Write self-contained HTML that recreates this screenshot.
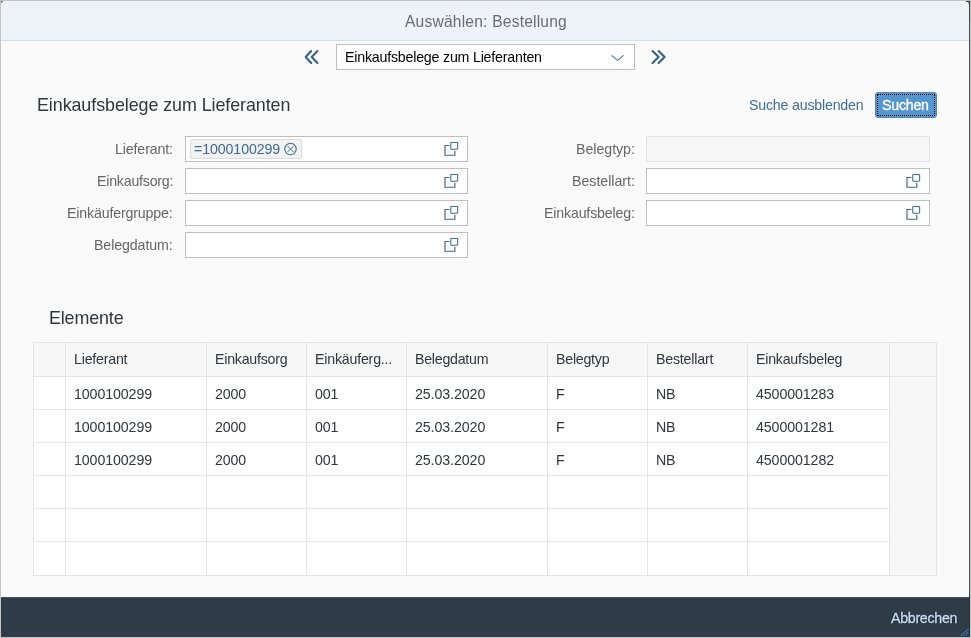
<!DOCTYPE html>
<html><head><meta charset="utf-8">
<style>
*{box-sizing:border-box;margin:0;padding:0}
html,body{width:971px;height:638px;overflow:hidden;background:#c4c4c4;font-family:"Liberation Sans",sans-serif}
.a{position:absolute;white-space:nowrap;line-height:1}
.t{will-change:transform}
#dlg{position:absolute;left:1px;top:1px;width:969px;height:636px;background:#fafafa;overflow:hidden}
#hdr{position:absolute;left:0;top:0;width:968px;height:40px;background:#eef3f8;border-bottom:1px solid #d4e0ec}
#rline{position:absolute;left:968px;top:0;width:1px;height:636px;background:linear-gradient(#34404c 0,#34404c 20px,#505356 20px,#505356 595px,#2b3640 595px)}
.inp{position:absolute;height:26px;background:#fff;border:1px solid #bfbfbf}
.inp.dis{background:#f7f7f7;border-color:#e3e3e3}
#ftr{position:absolute;left:0;top:596px;width:968px;height:40px;background:#2f3b47;border-top:1px solid #3d5266}
</style></head><body>
<div id="dlg">
  <div id="hdr"></div>
  <div id="rline"></div>
  <div id="ftr"></div>
</div>
<div class="a" style="left:1px;top:1px;width:2px;height:2px;background:#777;border-radius:0 0 2px 0"></div>
<div class="a" style="left:966px;top:1px;width:4px;height:1px;background:#2d3946"></div>
<div class="a" style="left:968px;top:2px;width:1px;height:2px;background:#9aa3ab"></div>
<svg class="a" style="left:300px;top:46px" width="24" height="22" viewBox="0 0 24 22">
  <path d="M11.2 5 L5.7 11 L11.2 17 M17.4 5 L11.7 11 L17.4 17" fill="none" stroke="#346187" stroke-width="2.1" stroke-linecap="round" stroke-linejoin="round"/>
</svg>
<div class="inp" style="left:336px;top:44px;width:299px;height:26px"></div>
<svg class="a" style="left:608px;top:50px" width="20" height="14" viewBox="0 0 20 14">
  <path d="M3.5 5.3 L9.6 10.4 L15.6 5.3" fill="none" stroke="#4a7299" stroke-width="1.1"/>
</svg>
<svg class="a" style="left:646px;top:46px" width="24" height="22" viewBox="0 0 24 22">
  <path d="M6.55 5 L12.6 11 L6.55 17 M12.6 5 L18.6 11 L12.6 17" fill="none" stroke="#346187" stroke-width="2.1" stroke-linecap="round" stroke-linejoin="round"/>
</svg>
<div class="a" style="left:875px;top:92px;width:62px;height:26px;background:#5496cd;border-radius:3px;border:1px solid #4a88bd"></div>
<div class="a" style="left:877px;top:94px;width:58px;height:22px;border:1px dotted #000"></div>
<div class="inp" style="left:185px;top:136px;width:283px"></div>
<svg class="a" style="left:440px;top:136px" width="24" height="24" viewBox="0 0 24 24"><rect x="10.75" y="6.55" width="6.9" height="6.6" rx="0.6" fill="none" stroke="#3d6b93" stroke-width="1.05"/><path d="M9.5 9.5 H5.0 V19.25 H14.85 V15" fill="none" stroke="#3d6b93" stroke-width="1.2"/></svg>
<div class="inp" style="left:185px;top:168px;width:283px"></div>
<svg class="a" style="left:440px;top:168px" width="24" height="24" viewBox="0 0 24 24"><rect x="10.75" y="6.55" width="6.9" height="6.6" rx="0.6" fill="none" stroke="#3d6b93" stroke-width="1.05"/><path d="M9.5 9.5 H5.0 V19.25 H14.85 V15" fill="none" stroke="#3d6b93" stroke-width="1.2"/></svg>
<div class="inp" style="left:185px;top:200px;width:283px"></div>
<svg class="a" style="left:440px;top:200px" width="24" height="24" viewBox="0 0 24 24"><rect x="10.75" y="6.55" width="6.9" height="6.6" rx="0.6" fill="none" stroke="#3d6b93" stroke-width="1.05"/><path d="M9.5 9.5 H5.0 V19.25 H14.85 V15" fill="none" stroke="#3d6b93" stroke-width="1.2"/></svg>
<div class="inp" style="left:185px;top:232px;width:283px"></div>
<svg class="a" style="left:440px;top:232px" width="24" height="24" viewBox="0 0 24 24"><rect x="10.75" y="6.55" width="6.9" height="6.6" rx="0.6" fill="none" stroke="#3d6b93" stroke-width="1.05"/><path d="M9.5 9.5 H5.0 V19.25 H14.85 V15" fill="none" stroke="#3d6b93" stroke-width="1.2"/></svg>
<div class="inp dis" style="left:646px;top:136px;width:284px"></div>
<div class="inp" style="left:646px;top:168px;width:284px"></div>
<svg class="a" style="left:902px;top:168px" width="24" height="24" viewBox="0 0 24 24"><rect x="10.75" y="6.55" width="6.9" height="6.6" rx="0.6" fill="none" stroke="#3d6b93" stroke-width="1.05"/><path d="M9.5 9.5 H5.0 V19.25 H14.85 V15" fill="none" stroke="#3d6b93" stroke-width="1.2"/></svg>
<div class="inp" style="left:646px;top:200px;width:284px"></div>
<svg class="a" style="left:902px;top:200px" width="24" height="24" viewBox="0 0 24 24"><rect x="10.75" y="6.55" width="6.9" height="6.6" rx="0.6" fill="none" stroke="#3d6b93" stroke-width="1.05"/><path d="M9.5 9.5 H5.0 V19.25 H14.85 V15" fill="none" stroke="#3d6b93" stroke-width="1.2"/></svg>
<div class="a" style="left:190px;top:139px;width:112px;height:20px;background:#f2f2f2;border:1px solid #dcdcdc;border-radius:2px"></div>
<svg class="a" style="left:282px;top:141px" width="17" height="17" viewBox="0 0 17 17"><circle cx="8.5" cy="8" r="5.7" fill="none" stroke="#3f6a94" stroke-width="1.1"/><path d="M5.5 5 L11.5 11 M11.5 5 L5.5 11" stroke="#3f6a94" stroke-width="1"/></svg>
<div class="a" style="left:33px;top:342px;width:904px;height:234px;background:#f7f7f7;border:1px solid #e5e5e5"></div>
<div class="a" style="left:34px;top:377px;width:855px;height:198px;background:#fff"></div>
<div class="a" style="left:65px;top:343px;width:1px;height:232px;background:#e5e5e5"></div>
<div class="a" style="left:206px;top:343px;width:1px;height:232px;background:#e5e5e5"></div>
<div class="a" style="left:306px;top:343px;width:1px;height:232px;background:#e5e5e5"></div>
<div class="a" style="left:406px;top:343px;width:1px;height:232px;background:#e5e5e5"></div>
<div class="a" style="left:547px;top:343px;width:1px;height:232px;background:#e5e5e5"></div>
<div class="a" style="left:647px;top:343px;width:1px;height:232px;background:#e5e5e5"></div>
<div class="a" style="left:747px;top:343px;width:1px;height:232px;background:#e5e5e5"></div>
<div class="a" style="left:889px;top:343px;width:1px;height:232px;background:#e5e5e5"></div>
<div class="a" style="left:34px;top:376px;width:902px;height:1px;background:#e5e5e5"></div>
<div class="a" style="left:34px;top:409px;width:855px;height:1px;background:#e5e5e5"></div>
<div class="a" style="left:34px;top:442px;width:855px;height:1px;background:#e5e5e5"></div>
<div class="a" style="left:34px;top:475px;width:855px;height:1px;background:#e5e5e5"></div>
<div class="a" style="left:34px;top:508px;width:855px;height:1px;background:#e5e5e5"></div>
<div class="a" style="left:34px;top:541px;width:855px;height:1px;background:#e5e5e5"></div>
<div class="a t" style="left:404.70px;top:14.09px;font-size:15.6px;letter-spacing:0.201px;color:#6a6d70;">Auswählen: Bestellung</div>
<div class="a t" style="left:344.60px;top:49.98px;font-size:14.2px;letter-spacing:-0.197px;color:#000;">Einkaufsbelege zum Lieferanten</div>
<div class="a t" style="left:36.90px;top:96.85px;font-size:17.9px;letter-spacing:-0.076px;color:#32363a;">Einkaufsbelege zum Lieferanten</div>
<div class="a t" style="left:748.70px;top:97.98px;font-size:14.2px;letter-spacing:-0.196px;color:#3f6d94;">Suche ausblenden</div>
<div class="a t" style="left:882.40px;top:97.98px;font-size:14.2px;letter-spacing:-0.225px;color:#fff;-webkit-text-stroke:0.3px #fff;">Suchen</div>
<div class="a t" style="right:798.13px;top:141.98px;font-size:14.2px;letter-spacing:-0.128px;color:#666;">Lieferant:</div>
<div class="a t" style="right:798.22px;top:173.98px;font-size:14.2px;letter-spacing:-0.216px;color:#666;">Einkaufsorg:</div>
<div class="a t" style="right:798.16px;top:205.98px;font-size:14.2px;letter-spacing:-0.164px;color:#666;">Einkäufergruppe:</div>
<div class="a t" style="right:798.10px;top:237.98px;font-size:14.2px;letter-spacing:-0.097px;color:#666;">Belegdatum:</div>
<div class="a t" style="right:336.03px;top:141.98px;font-size:14.2px;letter-spacing:-0.032px;color:#666;">Belegtyp:</div>
<div class="a t" style="right:336.02px;top:173.98px;font-size:14.2px;letter-spacing:-0.019px;color:#666;">Bestellart:</div>
<div class="a t" style="right:336.17px;top:205.98px;font-size:14.2px;letter-spacing:-0.168px;color:#666;">Einkaufsbeleg:</div>
<div class="a t" style="left:194.00px;top:141.98px;font-size:14.2px;letter-spacing:-0.100px;color:#3f6a94;">=1000100299</div>
<div class="a t" style="left:48.90px;top:309.85px;font-size:17.9px;letter-spacing:-0.142px;color:#32363a;">Elemente</div>
<div class="a t" style="left:74.30px;top:351.98px;font-size:14.2px;letter-spacing:-0.207px;color:#32363a;">Lieferant</div>
<div class="a t" style="left:215.30px;top:351.98px;font-size:14.2px;letter-spacing:-0.225px;color:#32363a;">Einkaufsorg</div>
<div class="a t" style="left:315.30px;top:351.98px;font-size:14.2px;letter-spacing:-0.199px;color:#32363a;">Einkäuferg...</div>
<div class="a t" style="left:415.30px;top:351.98px;font-size:14.2px;letter-spacing:-0.252px;color:#32363a;">Belegdatum</div>
<div class="a t" style="left:556.30px;top:351.98px;font-size:14.2px;letter-spacing:-0.237px;color:#32363a;">Belegtyp</div>
<div class="a t" style="left:656.30px;top:351.98px;font-size:14.2px;letter-spacing:-0.197px;color:#32363a;">Bestellart</div>
<div class="a t" style="left:756.30px;top:351.98px;font-size:14.2px;letter-spacing:-0.223px;color:#32363a;">Einkaufsbeleg</div>
<div class="a t" style="left:73.50px;top:386.98px;font-size:14.2px;letter-spacing:-0.088px;color:#32363a;">1000100299</div>
<div class="a t" style="left:214.50px;top:386.98px;font-size:14.2px;letter-spacing:-0.105px;color:#32363a;">2000</div>
<div class="a t" style="left:314.50px;top:386.98px;font-size:14.2px;letter-spacing:-0.118px;color:#32363a;">001</div>
<div class="a t" style="left:414.50px;top:386.98px;font-size:14.2px;letter-spacing:-0.079px;color:#32363a;">25.03.2020</div>
<div class="a t" style="left:555.50px;top:386.98px;font-size:14.2px;letter-spacing:-0.087px;color:#32363a;">F</div>
<div class="a t" style="left:655.50px;top:386.98px;font-size:14.2px;letter-spacing:-0.197px;color:#32363a;">NB</div>
<div class="a t" style="left:755.50px;top:386.98px;font-size:14.2px;letter-spacing:-0.088px;color:#32363a;">4500001283</div>
<div class="a t" style="left:73.50px;top:419.98px;font-size:14.2px;letter-spacing:-0.088px;color:#32363a;">1000100299</div>
<div class="a t" style="left:214.50px;top:419.98px;font-size:14.2px;letter-spacing:-0.105px;color:#32363a;">2000</div>
<div class="a t" style="left:314.50px;top:419.98px;font-size:14.2px;letter-spacing:-0.118px;color:#32363a;">001</div>
<div class="a t" style="left:414.50px;top:419.98px;font-size:14.2px;letter-spacing:-0.079px;color:#32363a;">25.03.2020</div>
<div class="a t" style="left:555.50px;top:419.98px;font-size:14.2px;letter-spacing:-0.087px;color:#32363a;">F</div>
<div class="a t" style="left:655.50px;top:419.98px;font-size:14.2px;letter-spacing:-0.197px;color:#32363a;">NB</div>
<div class="a t" style="left:755.50px;top:419.98px;font-size:14.2px;letter-spacing:-0.088px;color:#32363a;">4500001281</div>
<div class="a t" style="left:73.50px;top:452.98px;font-size:14.2px;letter-spacing:-0.088px;color:#32363a;">1000100299</div>
<div class="a t" style="left:214.50px;top:452.98px;font-size:14.2px;letter-spacing:-0.105px;color:#32363a;">2000</div>
<div class="a t" style="left:314.50px;top:452.98px;font-size:14.2px;letter-spacing:-0.118px;color:#32363a;">001</div>
<div class="a t" style="left:414.50px;top:452.98px;font-size:14.2px;letter-spacing:-0.079px;color:#32363a;">25.03.2020</div>
<div class="a t" style="left:555.50px;top:452.98px;font-size:14.2px;letter-spacing:-0.087px;color:#32363a;">F</div>
<div class="a t" style="left:655.50px;top:452.98px;font-size:14.2px;letter-spacing:-0.197px;color:#32363a;">NB</div>
<div class="a t" style="left:755.50px;top:452.98px;font-size:14.2px;letter-spacing:-0.088px;color:#32363a;">4500001282</div>
<div class="a t" style="left:890.70px;top:610.98px;font-size:14.2px;letter-spacing:-0.278px;color:#c8dcf2;text-shadow:0 0 1.5px #000;-webkit-text-stroke:0.35px #c8dcf2;">Abbrechen</div>
<svg class="a" style="left:958px;top:626px" width="12" height="12" viewBox="0 0 12 12"><path d="M3 9.5 L10.5 3 M6.5 9.5 L10.5 6" stroke="#4a90d0" stroke-width="1.1" stroke-dasharray="1.2 0.6"/></svg>
</body></html>
